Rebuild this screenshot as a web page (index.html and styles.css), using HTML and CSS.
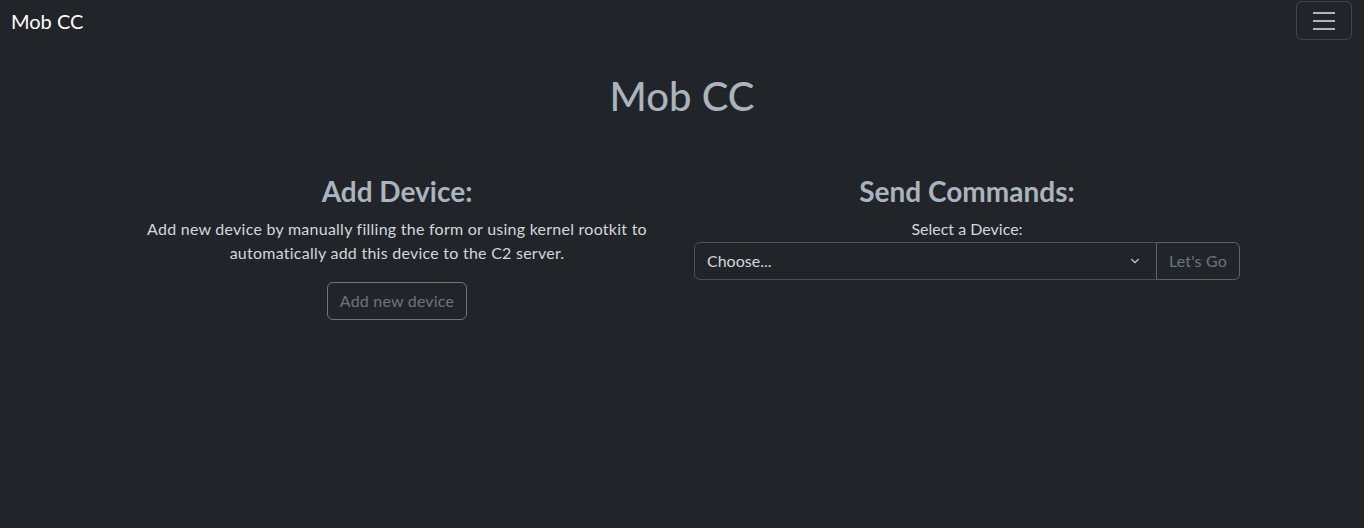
FILE: index.html
```html
<!DOCTYPE html>
<html lang="en">
<head>
<meta charset="utf-8">
<title>Mob CC</title>
<link rel="stylesheet" href="styles.css">
</head>
<body>
<nav class="navbar">
  <a class="brand" href="#">Mob CC</a>
  <button class="toggler" type="button" aria-label="Toggle navigation">
    <svg width="30" height="30" viewBox="0 0 30 30" aria-hidden="true"><path d="M4 7h22M4 15h22M4 23h22" stroke="#adb5bd" stroke-width="2" stroke-linecap="butt"/></svg>
  </button>
</nav>
<main class="container">
  <h1 class="title">Mob CC</h1>
  <div class="row">
    <section class="col">
      <h3 class="heading">Add Device:</h3>
      <p class="desc">Add new device by manually filling the form or using kernel rootkit to automatically add this device to the C2 server.</p>
      <button class="btn" type="button">Add new device</button>
    </section>
    <section class="col">
      <h3 class="heading">Send Commands:</h3>
      <label class="label" for="dev">Select a Device:</label>
      <div class="input-group">
        <div class="select" id="dev">
          <span>Choose...</span>
          <svg width="16" height="16" viewBox="0 0 16 16" aria-hidden="true"><path d="M2 5l6 6 6-6" fill="none" stroke="#dee2e6" stroke-width="2" stroke-linecap="round" stroke-linejoin="round" transform="translate(3.5 3.5) scale(0.56)"/></svg>
        </div>
        <button class="btn btn-go" type="button">Let's Go</button>
      </div>
    </section>
  </div>
</main>
</body>
</html>
```
FILE: styles.css
```css
* { box-sizing: border-box; }
html, body { margin: 0; padding: 0; }
body {
  background: #212529;
  color: #dee2e6;
  font-family: Lato, "Noto Sans", "DejaVu Sans", sans-serif;
  font-size: 16px;
  line-height: 1.5;
  height: 528px;
}
.navbar {
  display: flex;
  align-items: center;
  justify-content: space-between;
  height: 40px;
  padding: 0 12px 0 11px;
}
.brand {
  color: #ffffff;
  text-decoration: none;
  font-size: 20px;
  line-height: 30px;
  padding-top: 2px;
}
.toggler {
  width: 56px;
  height: 39px;
  margin-top: 1px;
  background: transparent;
  border: 1px solid rgba(255,255,255,0.15);
  border-radius: 6px;
  display: flex;
  align-items: center;
  justify-content: center;
  padding: 0;
}
.toggler svg { display: block; }
.container {
  width: 1140px;
  margin: 0 auto;
  padding: 32px 12px 0;
}
.title {
  margin: 0 0 8px;
  text-align: center;
  font-size: 40px;
  font-weight: 500;
  line-height: 1.2;
  color: #aab4be;
}
.row {
  display: flex;
  margin: 55px -12px 0;
}
.col {
  flex: 1 1 0;
  padding: 0 12px;
  text-align: center;
}
.heading {
  margin: 0 0 8px;
  font-size: 28px;
  font-weight: 700;
  line-height: 1.2;
  color: #aab4be;
}
.desc {
  margin: 0 0 17px;
  color: #d2d7dc;
  letter-spacing: 0.25px;
}
.btn {
  font-family: inherit;
  font-size: 16px;
  line-height: 24px;
  padding: 6px 12px;
  color: #6c757d;
  background: transparent;
  border: 1px solid #6c757d;
  border-radius: 6px;
  letter-spacing: 0.2px;
  white-space: nowrap;
}
.label {
  display: block;
  color: #d2d7dc;
}
.input-group {
  display: flex;
  text-align: left;
  margin-top: 1px;
}
.select {
  flex: 1 1 auto;
  display: flex;
  align-items: center;
  justify-content: space-between;
  height: 38px;
  padding: 6px 12px 6px 12px;
  border: 1px solid #495057;
  border-radius: 6px 0 0 6px;
  color: #d2d7dc;
}
.select svg { display: block; margin-right: 1px; }
.btn-go {
  flex: 0 0 84px;
  width: 84px;
  height: 38px;
  padding: 6px 4px;
  margin-left: -1px;
  text-align: center;
  border-radius: 0 6px 6px 0;
  border-color: #5c636a;
}
```
